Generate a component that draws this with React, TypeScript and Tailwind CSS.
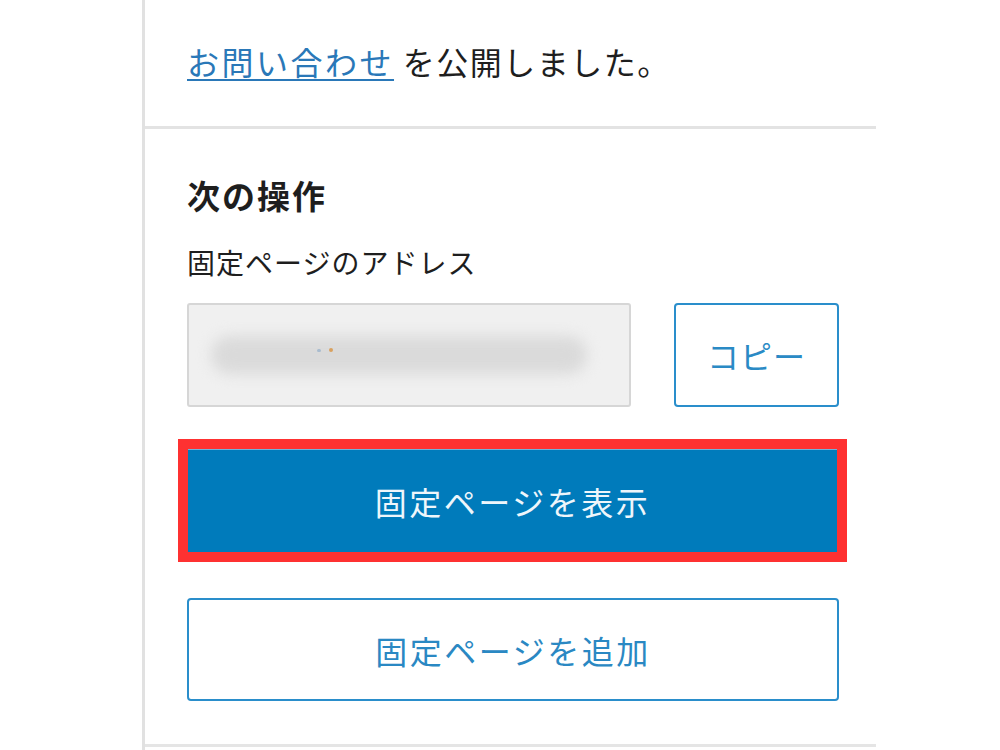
import { FC } from 'react';

const jp = "font-['Noto_Sans_CJK_JP','Noto_Sans',sans-serif]";

const PageAddress: FC = () => (
  <div className="flex h-[104px] items-stretch justify-between">
    <div className="relative flex w-[444px] items-center rounded-[3px] border-2 border-[#d6d6d6] bg-[#f0f0f0] px-[22px]">
      {/* address is blurred out in the capture */}
      <div className="h-[38px] w-[376px] rounded-full bg-[#dadada] blur-[7px]" />
      <span className="absolute left-[128px] top-[44px] h-[3px] w-[4px] rounded-full bg-[#a9bccf]" />
      <span className="absolute left-[140px] top-[43px] h-[4px] w-[4px] rounded-full bg-[#d9a15f]" />
    </div>
    <button className="w-[165px] rounded-[4px] border-2 border-[#2a8ecb] bg-white text-[32px] leading-none tracking-[1px] text-[#2a8ac5]">
      コピー
    </button>
  </div>
);

export default function App() {
  return (
    <div className={`h-[750px] w-[1000px] overflow-hidden bg-white pl-[142px] ${jp}`}>
      <div className="flex h-full w-[734px] flex-col border-l-[3px] border-[#e1e1e1]">
        <div className="h-[129px] border-b-[3px] border-[#e3e3e3] pl-[42px] pt-[41px]">
          <p className="text-[32px] leading-[40px] tracking-[1.5px] text-[#1e1e1e]">
            <a className="tracking-[2.5px] text-[#2a78b8] underline decoration-2 underline-offset-[4px]">お問い合わせ</a>{' '}
            を公開しました。
          </p>
        </div>

        <div className="flex flex-col pl-[42px] pr-[37px]">
          <h2 className="mt-[46px] text-[33px] font-bold leading-[40px] tracking-[2px] text-[#1e1e1e]">次の操作</h2>
          <label className="mt-[29px] text-[28px] leading-[36px] tracking-[1px] text-[#1e1e1e]">
            固定ページのアドレス
          </label>
          <div className="mt-[23px]">
            <PageAddress />
          </div>

          <button className="ml-[1px] mr-[2px] mt-[42px] h-[103px] border-t border-[#6fb1da] bg-[#007bbb] text-[32px] tracking-[2.5px] text-[#eef6fb] outline-[10px] outline-solid outline-[#fe3131]">
            固定ページを表示
          </button>

          <button className="mt-[46px] h-[103px] rounded-[4px] border-2 border-[#2a8ecb] bg-white text-[32px] tracking-[2.5px] text-[#2a88c3]">
            固定ページを追加
          </button>
        </div>

        <div className="mt-[43px] flex-1 border-t-[3px] border-[#e5e5e5]" />
      </div>
    </div>
  );
}
